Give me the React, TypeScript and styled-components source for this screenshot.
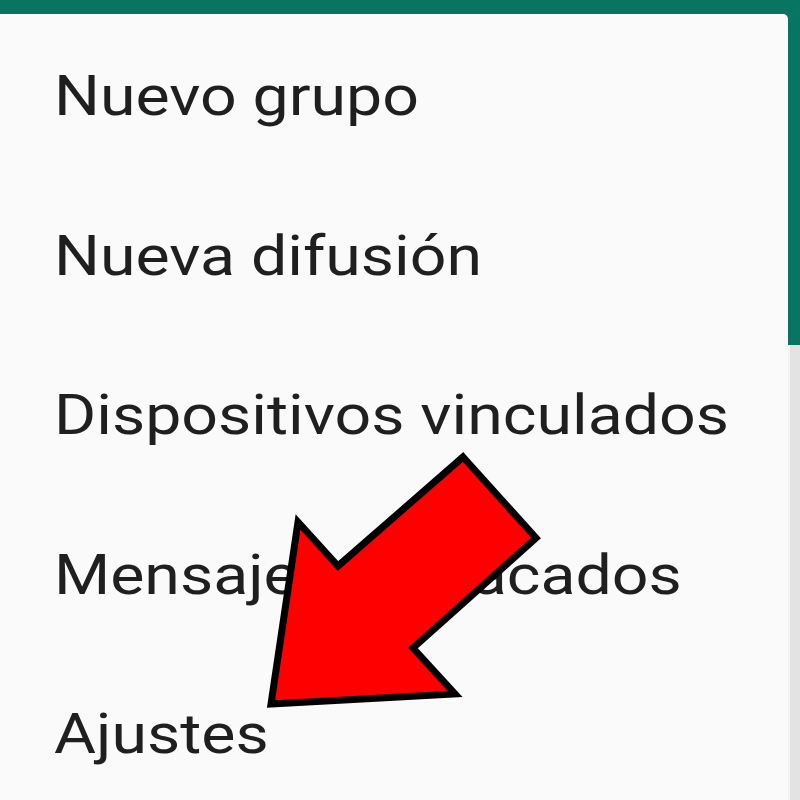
import styled, { createGlobalStyle } from 'styled-components';

const GlobalStyle = createGlobalStyle`
  html, body {
    margin: 0;
    padding: 0;
    background: #fafafa;
  }
  body {
    font-family: Roboto, "Noto Sans", sans-serif;
  }
`;

const Screen = styled.div`
  position: relative;
  width: 800px;
  height: 800px;
  overflow: hidden;
  display: flex;
  flex-direction: column;
  background: #077561;
`;

const TopBar = styled.div`
  height: 14px;
  flex-shrink: 0;
`;

const Body = styled.div`
  flex: 1;
  display: flex;
`;

const Menu = styled.ul`
  width: 788px;
  margin: 0;
  padding: 2px 0 0 0;
  list-style: none;
  background: #fafafa;
  border-top-right-radius: 5px;
`;

const MenuItem = styled.li`
  height: 159.5px;
  line-height: 160px;
  padding-left: 54px;
  font-size: 56px;
  color: #1f1f1f;
  white-space: nowrap;
`;

// the screenshot is stretched sideways, so the labels are too
const Label = styled.span`
  display: inline-block;
  transform: scaleX(1.15);
  transform-origin: left center;
`;

const Side = styled.div`
  flex: 1;
  display: flex;
  flex-direction: column;
`;

const SideGreen = styled.div`
  height: 331px;
  background: #077561;
`;

const SideGrey = styled.div`
  flex: 1;
  background: #e3e3e3;
  border-left: 2px solid #f4f4f4;
`;

const Arrow = styled.svg`
  position: absolute;
  left: 0;
  top: 0;
  pointer-events: none;
`;

const items = [
  'Nuevo grupo',
  'Nueva difusión',
  'Dispositivos vinculados',
  'Mensajes destacados',
  'Ajustes',
];

export default function App() {
  return (
    <>
      <GlobalStyle />
      <Screen>
        <TopBar />
        <Body>
          <Menu>
            {items.map((label) => (
              <MenuItem key={label}>
                <Label>{label}</Label>
              </MenuItem>
            ))}
          </Menu>
          <Side>
            <SideGreen />
            <SideGrey />
          </Side>
        </Body>
        <Arrow width="800" height="800" viewBox="0 0 800 800">
          <polygon
            points="463,457 536,538 413,648 455,694 271,704 298,522 338,566"
            fill="#fe0000"
            stroke="#000"
            strokeWidth="7"
            strokeLinejoin="miter"
          />
        </Arrow>
      </Screen>
    </>
  );
}
